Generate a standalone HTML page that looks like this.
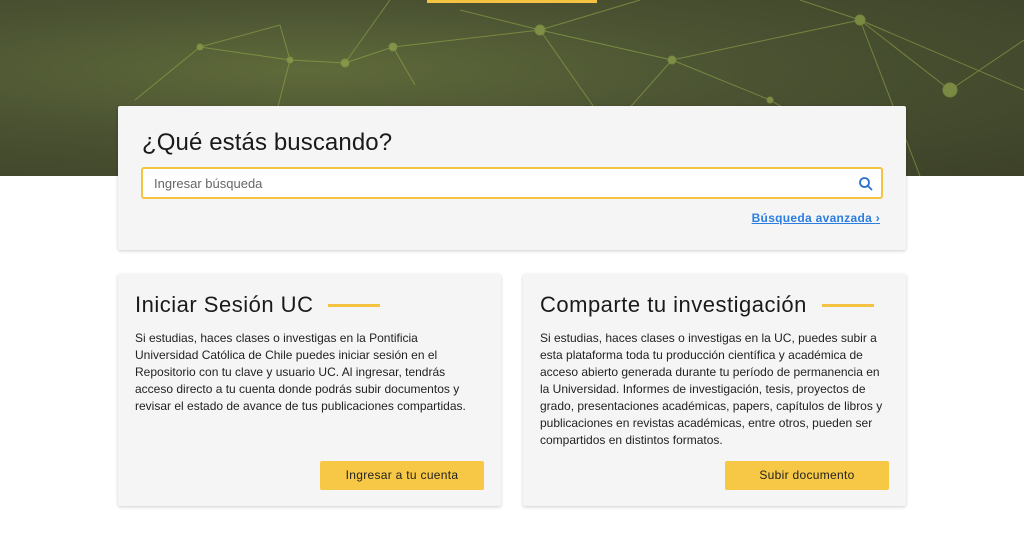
<!DOCTYPE html>
<html><head><meta charset="utf-8"><style>
*{margin:0;padding:0;box-sizing:border-box}
body{width:1024px;height:536px;overflow:hidden;background:#fff;font-family:"Liberation Sans",sans-serif;color:#1a1a1a;position:relative}
.hero{position:absolute;left:0;top:0;width:1024px;height:176px;background:radial-gradient(ellipse at 30% 40%,#5f6a3a 0%,#4a5232 45%,#3c4128 100%)}
.topbar{position:absolute;left:427px;top:0;width:170px;height:3px;background:#f5c342}
.card{position:absolute;background:#f5f5f5;box-shadow:0 1px 3px rgba(0,0,0,.2);border-radius:2px}
h1{position:absolute;left:24px;top:23px;font-size:24px;font-weight:400;letter-spacing:.1px}
.search{position:absolute;left:23px;top:61px;width:742px;height:32px;background:#fff;border:2px solid #f5c342;border-radius:3px;font-size:13px;color:#666;padding:7px 11px}
.adv{position:absolute;right:26px;top:105px;font-size:12px;color:#2b7de0;font-weight:bold;text-decoration:underline;letter-spacing:.3px}
h2{position:absolute;left:17px;top:18px;font-size:22px;font-weight:400;display:flex;align-items:center;letter-spacing:.5px}
h2 span{display:inline-block;width:52px;height:3px;background:#f5c342;margin-left:15px}
p{position:absolute;left:17px;top:56px;font-size:12px;line-height:17px;color:#222}
.btn{position:absolute;width:164px;height:29px;background:#f7c845;border-radius:2px;font-size:12px;text-align:center;line-height:29px;color:#222;letter-spacing:.3px}
</style></head><body>
<div class="hero">
<svg width="1024" height="176" style="position:absolute;left:0;top:0" stroke="#9bb04c" stroke-width="1" opacity=".55" fill="#a7bd55">
<line x1="200" y1="47" x2="280" y2="25"/><line x1="200" y1="47" x2="135" y2="100"/><line x1="200" y1="47" x2="290" y2="60"/><line x1="290" y1="60" x2="345" y2="63"/><line x1="280" y1="25" x2="290" y2="60"/><line x1="290" y1="60" x2="260" y2="176"/><line x1="345" y1="63" x2="390" y2="0"/><line x1="345" y1="63" x2="393" y2="47"/><line x1="393" y1="47" x2="540" y2="30"/><line x1="393" y1="47" x2="415" y2="85"/><line x1="540" y1="30" x2="640" y2="0"/><line x1="540" y1="30" x2="610" y2="130"/><line x1="540" y1="30" x2="672" y2="60"/><line x1="672" y1="60" x2="860" y2="20"/><line x1="672" y1="60" x2="770" y2="100"/><line x1="860" y1="20" x2="1024" y2="90"/><line x1="860" y1="20" x2="800" y2="0"/><line x1="860" y1="20" x2="920" y2="176"/><line x1="770" y1="100" x2="900" y2="176"/><line x1="950" y1="90" x2="1024" y2="40"/><line x1="950" y1="90" x2="860" y2="20"/><line x1="460" y1="10" x2="540" y2="30"/><line x1="610" y1="130" x2="672" y2="60"/>
<circle cx="200" cy="47" r="3"/><circle cx="290" cy="60" r="3"/><circle cx="345" cy="63" r="4"/><circle cx="393" cy="47" r="4"/><circle cx="540" cy="30" r="5"/><circle cx="672" cy="60" r="4"/><circle cx="860" cy="20" r="5"/><circle cx="950" cy="90" r="7"/><circle cx="770" cy="100" r="3"/>
</svg>
<div class="topbar"></div>
</div>
<div class="card" style="left:118px;top:106px;width:788px;height:144px">
<h1>¿Qué estás buscando?</h1>
<div class="search">Ingresar búsqueda
<svg width="16" height="16" viewBox="0 0 16 16" style="position:absolute;right:7px;top:7px" fill="none" stroke="#2b6fd0" stroke-width="1.8"><circle cx="6.5" cy="6.5" r="4.5"/><line x1="10" y1="10" x2="14" y2="14"/></svg></div>
<div class="adv">Búsqueda avanzada <span style="text-decoration:none;color:#2b7de0">›</span></div>
</div>
<div class="card" style="left:118px;top:274px;width:383px;height:232px">
<h2>Iniciar Sesión UC<span></span></h2>
<p>Si estudias, haces clases o investigas en la Pontificia<br>Universidad Católica de Chile puedes iniciar sesión en el<br>Repositorio con tu clave y usuario UC. Al ingresar, tendrás<br>acceso directo a tu cuenta donde podrás subir documentos y<br>revisar el estado de avance de tus publicaciones compartidas.</p>
<div class="btn" style="left:202px;top:187px">Ingresar a tu cuenta</div>
</div>
<div class="card" style="left:523px;top:274px;width:383px;height:232px">
<h2>Comparte tu investigación<span></span></h2>
<p>Si estudias, haces clases o investigas en la UC, puedes subir a<br>esta plataforma toda tu producción científica y académica de<br>acceso abierto generada durante tu período de permanencia en<br>la Universidad. Informes de investigación, tesis, proyectos de<br>grado, presentaciones académicas, papers, capítulos de libros y<br>publicaciones en revistas académicas, entre otros, pueden ser<br>compartidos en distintos formatos.</p>
<div class="btn" style="left:202px;top:187px">Subir documento</div>
</div>
</body></html>
